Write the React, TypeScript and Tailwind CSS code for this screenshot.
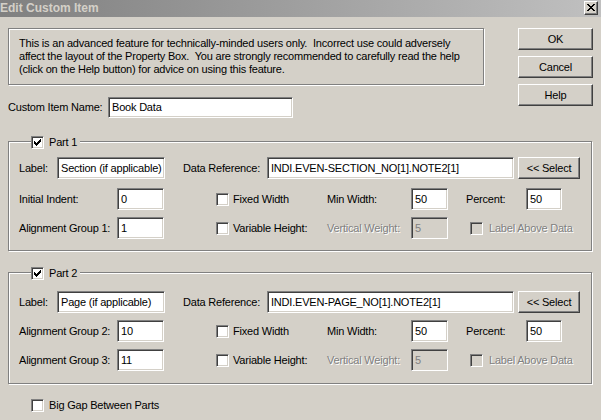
import React from "react";

const CHECK_COLS: [number, number][] = [
  [3, 5],
  [4, 6],
  [5, 7],
  [6, 6],
  [7, 5],
  [8, 4],
  [9, 3],
];

function Check({ checked = false, disabled = false }: { checked?: boolean; disabled?: boolean }) {
  return (
    <span
      className={`relative inline-block w-[13px] h-[13px] shrink-0 border border-t-[#808080] border-l-[#808080] border-b-white border-r-white shadow-[inset_1px_1px_0_#404040,inset_-1px_-1px_0_#d4d0c8] ${
        disabled ? "bg-[#d4d0c8]" : "bg-white"
      }`}
    >
      {checked && (
        <svg
          className="absolute left-[-1px] top-[-1px]"
          width="13"
          height="13"
          viewBox="0 0 13 13"
          shapeRendering="crispEdges"
        >
          {CHECK_COLS.map(([x, y]) => (
            <rect key={x} x={x} y={y} width="1" height="3" fill="#000" />
          ))}
        </svg>
      )}
    </span>
  );
}

function Field({
  w,
  value,
  disabled = false,
  h = "h-[22px]",
}: {
  w: string;
  value: string;
  disabled?: boolean;
  h?: string;
}) {
  return (
    <div
      className={`${w} ${h} shrink-0 flex items-center pl-[3px] overflow-hidden whitespace-nowrap border border-t-[#808080] border-l-[#808080] border-b-white border-r-white shadow-[inset_1px_1px_0_#404040,inset_-1px_-1px_0_#d4d0c8] ${
        disabled ? "bg-[#d4d0c8] text-[#808080]" : "bg-white text-black"
      }`}
    >
      {value}
    </div>
  );
}

function Button({ children, w = "w-[75px]" }: { children: React.ReactNode; w?: string }) {
  return (
    <div
      className={`${w} h-[22px] shrink-0 flex items-center justify-center border border-t-white border-l-white border-b-[#404040] border-r-[#404040] shadow-[inset_-1px_-1px_0_#808080] bg-[#d4d0c8] text-black`}
    >
      {children}
    </div>
  );
}

const dis = "text-[#808080] [text-shadow:1px_1px_0_#ffffff]";

function Group({
  title,
  pt,
  pb,
  children,
}: {
  title: string;
  pt: string;
  pb: string;
  children: React.ReactNode;
}) {
  return (
    <div
      className={`relative w-[584px] border border-[#808080] shadow-[1px_1px_0_#ffffff,inset_1px_1px_0_#ffffff] pl-[10px] ${pt} ${pb}`}
    >
      <div className="absolute left-[22px] top-[-6px] h-[13px] flex items-center bg-[#d4d0c8] pr-[3px]">
        <Check checked />
        <span className="ml-[5px] leading-[13px]">{title}</span>
      </div>
      {children}
    </div>
  );
}

function RowOne({ label, data }: { label: string; data: string }) {
  return (
    <div className="flex items-center h-[22px]">
      <span className="w-[38px] shrink-0">Label:</span>
      <Field w="w-[108px]" value={label} />
      <span className="ml-[18px] w-[84px] shrink-0">Data Reference:</span>
      <Field w="w-[247px]" value={data} />
      <div className="ml-[4px]">
        <Button w="w-[62px]">&lt;&lt; Select</Button>
      </div>
    </div>
  );
}

function RowFixed({ label, value }: { label: string; value: string }) {
  return (
    <div className="flex items-center h-[22px]">
      <span className="w-[98px] shrink-0">{label}</span>
      <Field w="w-[47px]" value={value} />
      <div className="ml-[52px] w-[111px] shrink-0 flex items-center">
        <Check />
        <span className="ml-[4px]">Fixed Width</span>
      </div>
      <span className="w-[84px] shrink-0">Min Width:</span>
      <Field w="w-[37px]" value="50" />
      <span className="ml-[18px] w-[60px] shrink-0">Percent:</span>
      <Field w="w-[36px]" value="50" />
    </div>
  );
}

function RowVar({ label, value }: { label: string; value: string }) {
  return (
    <div className="flex items-center h-[22px]">
      <span className="w-[98px] shrink-0">{label}</span>
      <Field w="w-[47px]" value={value} />
      <div className="ml-[52px] w-[111px] shrink-0 flex items-center">
        <Check />
        <span className="ml-[4px]">Variable Height:</span>
      </div>
      <span className={`w-[84px] shrink-0 ${dis}`}>Vertical Weight:</span>
      <Field w="w-[37px]" value="5" disabled />
      <div className="ml-[22px] flex items-center">
        <Check disabled />
        <span className={`ml-[6px] ${dis}`}>Label Above Data</span>
      </div>
    </div>
  );
}

export default function App() {
  return (
    <div className="w-[601px] h-[420px] overflow-hidden bg-[#d4d0c8] text-black text-[11px] leading-[13px] tracking-[-0.2px] font-['Liberation_Sans',Arial,sans-serif] flex flex-col">
      {/* Title bar */}
      <div className="h-[17px] shrink-0 flex items-center justify-between bg-linear-to-r from-[#808080] to-[#c0c0c0]">
        <span className="font-bold text-[#d4d0c8] text-[12px] tracking-[0px]">Edit Custom Item</span>
        <div className="mr-[3px] mb-[2px] w-[14px] h-[14px] flex items-center justify-center bg-[#d4d0c8] border border-t-white border-l-white border-b-[#404040] border-r-[#404040] shadow-[inset_-1px_-1px_0_#808080]">
          <svg width="8" height="7" viewBox="0 0 8 7" shapeRendering="crispEdges">
            <path d="M0 0h2v1h-2zM6 0h2v1h-2zM1 1h2v1h-2zM5 1h2v1h-2zM2 2h4v1h-4zM3 3h2v1h-2zM2 4h4v1h-4zM1 5h2v1h-2zM5 5h2v1h-2zM0 6h2v1h-2zM6 6h2v1h-2z" fill="#000" />
          </svg>
        </div>
      </div>

      <div className="pl-[8px] flex flex-col">
        {/* Top area */}
        <div className="mt-[11px] flex items-start">
          <div className="flex flex-col">
            <div className="w-[476px] h-[57px] border border-[#808080] shadow-[1px_1px_0_#ffffff,inset_1px_1px_0_#ffffff] pl-[10px] pt-[8px] whitespace-pre leading-[13px]">
              {"This is an advanced feature for technically-minded users only.  Incorrect use could adversely\naffect the layout of the Property Box.  You are strongly recommended to carefully read the help\n(click on the Help button) for advice on using this feature."}
            </div>
            <div className="mt-[12px] flex items-center h-[21px]">
              <span className="w-[100px] shrink-0">Custom Item Name:</span>
              <Field w="w-[185px]" h="h-[21px]" value="Book Data" />
            </div>
          </div>
          <div className="ml-[34px] flex flex-col gap-[6px]">
            <Button>OK</Button>
            <Button>Cancel</Button>
            <Button>Help</Button>
          </div>
        </div>

        {/* Part 1 */}
        <div className="mt-[23px]">
          <Group title="Part 1" pt="pt-[15px]" pb="pb-[11px]">
            <RowOne label="Section (if applicable)" data="INDI.EVEN-SECTION_NO[1].NOTE2[1]" />
            <div className="mt-[9px]">
              <RowFixed label="Initial Indent:" value="0" />
            </div>
            <div className="mt-[7px]">
              <RowVar label="Alignment Group 1:" value="1" />
            </div>
          </Group>
        </div>

        {/* Part 2 */}
        <div className="mt-[21px]">
          <Group title="Part 2" pt="pt-[18px]" pb="pb-[12px]">
            <RowOne label="Page (if applicable)" data="INDI.EVEN-PAGE_NO[1].NOTE2[1]" />
            <div className="mt-[7px]">
              <RowFixed label="Alignment Group 2:" value="10" />
            </div>
            <div className="mt-[7px]">
              <RowVar label="Alignment Group 3:" value="11" />
            </div>
          </Group>
        </div>

        <div className="mt-[15px] ml-[23px] flex items-center">
          <Check />
          <span className="ml-[5px]">Big Gap Between Parts</span>
        </div>
      </div>
    </div>
  );
}
